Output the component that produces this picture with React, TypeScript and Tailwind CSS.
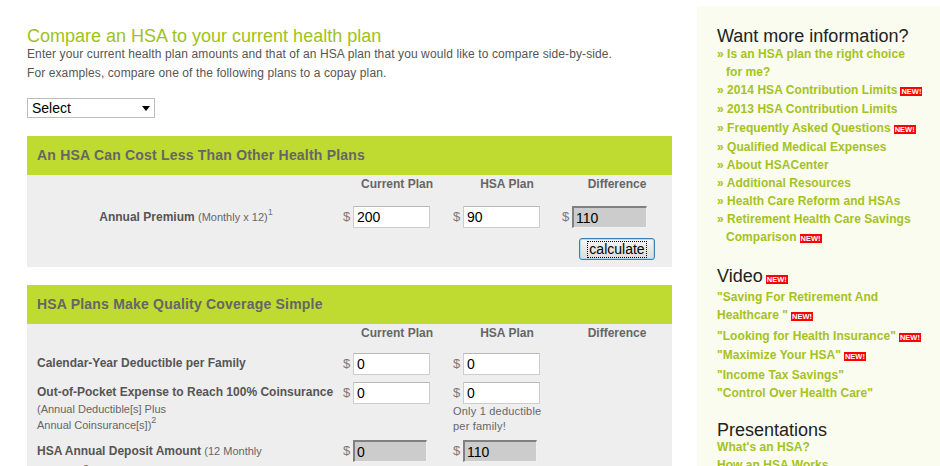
import React from "react";

const NewBadge = ({ className = "" }: { className?: string }) => (
  <span
    className={`inline-block indent-0 bg-[#ff0000] text-white text-[7.5px] font-bold leading-[9px] px-[1px] ml-[3px] tracking-normal ${className}`}
  >
    NEW!
  </span>
);

const TextInput = ({ value, w = "w-[77px]" }: { value: string; w?: string }) => (
  <input
    defaultValue={value}
    className={`${w} h-[22px] border border-[#cdcdcd] border-t-[#b8b8b8] bg-white px-[3px] text-[14px] text-black outline-none font-['Liberation_Sans',Arial,sans-serif]`}
  />
);

const ReadInput = ({ value, w = "w-[75px]" }: { value: string; w?: string }) => (
  <input
    readOnly
    defaultValue={value}
    className={`${w} h-[22px] border-t-2 border-l-2 border-r border-b border-t-[#808080] border-l-[#808080] border-r-[#f2f2f2] border-b-[#f2f2f2] bg-[#cccccc] px-[2px] text-[14px] text-black outline-none font-['Liberation_Sans',Arial,sans-serif]`}
  />
);

const Dollar = () => <span className="w-[10px] text-[13px] text-[#7a7a7a] leading-[22px]">$</span>;

const ColHeaders = () => (
  <div className="grid grid-cols-[315px_110px_110px_110px] h-[18px] items-center text-[12px] font-bold text-[#666]">
    <div />
    <div className="text-center">Current Plan</div>
    <div className="text-center">HSA Plan</div>
    <div className="text-center">Difference</div>
  </div>
);

const SectionHeader = ({ title }: { title: string }) => (
  <div className="h-[39px] bg-[#bfda30] flex items-center pl-[10px] text-[14px] font-bold text-[#666] tracking-[0.2px]">
    {title}
  </div>
);

const liMain = "pl-[9px] indent-[-9px]";

export default function App() {
  return (
    <div className="flex w-[940px] h-[466px] overflow-hidden bg-white font-['Liberation_Sans',Arial,sans-serif]">
      <main className="w-[645px] ml-[27px] shrink-0 pt-[27px]">
        <h1 className="text-[18px] leading-[18px] text-[#9ec21a]">Compare an HSA to your current health plan</h1>
        <p className="mt-[0px] text-[12px] leading-[19px] text-[#555] tracking-[0.1px]">
          Enter your current health plan amounts and that of an HSA plan that you would like to compare side-by-side.
          <br />
          For examples, compare one of the following plans to a copay plan.
        </p>
        <div className="mt-[15px] w-[128px] h-[20px] border border-[#bcbcbc] bg-white flex items-center justify-between pl-[4px] pr-[4px]">
          <span className="text-[14px] text-black leading-[18px]">Select</span>
          <svg width="8" height="5" viewBox="0 0 8 5">
            <path d="M0 0 H8 L4 5 Z" fill="#000" />
          </svg>
        </div>

        {/* Section 1 */}
        <section className="mt-[18px]">
          <SectionHeader title="An HSA Can Cost Less Than Other Health Plans" />
          <div className="bg-[#eeeeee] pb-[7px]">
            <ColHeaders />
            <div className="grid grid-cols-[315px_110px_110px_110px] mt-[13px] items-center">
              <div className="text-center text-[12px] text-[#555] pl-[3px]">
                <span className="font-bold">Annual Premium</span>{" "}
                <span className="text-[11px] text-[#666]">(Monthly x 12)</span>
                <sup className="text-[9px] text-[#5a7fae] top-[-6px]">1</sup>
              </div>
              <div className="flex items-center pl-[1px]">
                <Dollar />
                <TextInput value="200" />
              </div>
              <div className="flex items-center pl-[1px]">
                <Dollar />
                <TextInput value="90" />
              </div>
              <div className="flex items-center">
                <Dollar />
                <ReadInput value="110" />
              </div>
            </div>
            <div className="grid grid-cols-[315px_110px_110px_110px] mt-[10px]">
              <div />
              <div />
              <div />
              <div className="flex justify-center">
                <button className="w-[76px] h-[22px] rounded-[3px] border border-[#3c7fb1] bg-linear-to-b from-[#f6f6f6] to-[#dcdcdc] flex items-center justify-center shadow-[inset_0_0_0_1px_#a9dbf6]">
                  <span className="border border-dotted border-black text-[14px] leading-[15px] text-black px-[1px]">calculate</span>
                </button>
              </div>
            </div>
          </div>
        </section>

        {/* Section 2 */}
        <section className="mt-[18px]">
          <SectionHeader title="HSA Plans Make Quality Coverage Simple" />
          <div className="bg-[#eeeeee] pb-[20px]">
            <ColHeaders />
            <div className="grid grid-cols-[315px_110px_110px_110px] mt-[11px] items-center">
              <div className="pl-[10px] text-[12px] font-bold text-[#555] pb-[3px]">Calendar-Year Deductible per Family</div>
              <div className="flex items-center pl-[1px]">
                <Dollar />
                <TextInput value="0" />
              </div>
              <div className="flex items-center pl-[1px]">
                <Dollar />
                <TextInput value="0" />
              </div>
              <div />
            </div>
            <div className="grid grid-cols-[315px_110px_110px_110px] mt-[7px] items-start">
              <div className="pl-[10px] pt-[1px]">
                <div className="text-[12px] font-bold text-[#555] leading-[18px] whitespace-nowrap">
                  Out-of-Pocket Expense to Reach 100% Coinsurance
                </div>
                <div className="text-[11px] text-[#666] leading-[16px]">
                  (Annual Deductible[s] Plus
                  <br />
                  Annual Coinsurance[s])<sup className="text-[9px] top-[-6px]">2</sup>
                </div>
              </div>
              <div className="flex items-center pl-[1px]">
                <Dollar />
                <TextInput value="0" />
              </div>
              <div className="pl-[1px]">
                <div className="flex items-center">
                  <Dollar />
                  <TextInput value="0" />
                </div>
                <div className="text-[11px] text-[#666] leading-[15px] tracking-[0.2px]">
                  Only 1 deductible
                  <br />
                  per family!
                </div>
              </div>
              <div />
            </div>
            <div className="grid grid-cols-[315px_110px_110px_110px] mt-[6px] items-start">
              <div className="pl-[10px] text-[12px] text-[#555] leading-[22px]">
                <span className="font-bold">HSA Annual Deposit Amount</span>{" "}
                <span className="text-[11px] text-[#666]">(12 Monthly</span>
                <br />
                <span className="text-[11px] text-[#666]">Deposits)</span>
                <sup className="text-[9px] text-[#666] top-[-6px]">3</sup>
              </div>
              <div className="flex items-center pl-[1px]">
                <Dollar />
                <ReadInput value="0" w="w-[74px]" />
              </div>
              <div className="flex items-center pl-[1px]">
                <Dollar />
                <ReadInput value="110" w="w-[74px]" />
              </div>
              <div />
            </div>
          </div>
        </section>
      </main>

      <aside className="ml-[25px] mt-[6px] w-[250px] shrink-0 bg-[#f9fcee] pl-[20px] pt-[21px]">
        <h2 className="text-[18px] leading-[18px] text-[#222]">Want more information?</h2>
        <ul className="text-[12px] font-bold text-[#a6c21e] tracking-[0.05px]">
          <li className={`leading-[18px] ${liMain}`}>
            » Is an HSA plan the right choice
            <br />
            for me?
          </li>
          <li className={`leading-[19px] ${liMain}`}>
            » 2014 HSA Contribution Limits
            <NewBadge />
          </li>
          <li className={`leading-[19px] ${liMain}`}>» 2013 HSA Contribution Limits</li>
          <li className={`leading-[19px] ${liMain}`}>
            » Frequently Asked Questions
            <NewBadge />
          </li>
          <li className={`leading-[18px] ${liMain}`}>» Qualified Medical Expenses</li>
          <li className={`leading-[18px] ${liMain}`}>» About HSACenter</li>
          <li className={`leading-[18px] ${liMain}`}>» Additional Resources</li>
          <li className={`leading-[18px] ${liMain}`}>» Health Care Reform and HSAs</li>
          <li className={`leading-[18px] ${liMain}`}>
            » Retirement Health Care Savings
            <br />
            Comparison
            <NewBadge />
          </li>
        </ul>

        <h2 className="mt-[21px] text-[18px] leading-[18px] text-[#222]">
          Video
          <NewBadge />
        </h2>
        <ul className="mt-[3px] text-[12px] font-bold text-[#a6c21e] leading-[18px] tracking-[0.05px]">
          <li className="mb-[3px]">
            "Saving For Retirement And
            <br />
            Healthcare "<NewBadge />
          </li>
          <li className="mb-[1px]">
            "Looking for Health Insurance"
            <NewBadge />
          </li>
          <li className="mb-[2px]">
            "Maximize Your HSA"
            <NewBadge />
          </li>
          <li>"Income Tax Savings"</li>
          <li>"Control Over Health Care"</li>
        </ul>

        <h2 className="mt-[19px] text-[18px] leading-[18px] text-[#222]">Presentations</h2>
        <ul className="mt-[-1px] text-[12px] font-bold text-[#a6c21e] leading-[18px] tracking-[0.05px]">
          <li>What's an HSA?</li>
          <li>How an HSA Works</li>
        </ul>
      </aside>
    </div>
  );
}
